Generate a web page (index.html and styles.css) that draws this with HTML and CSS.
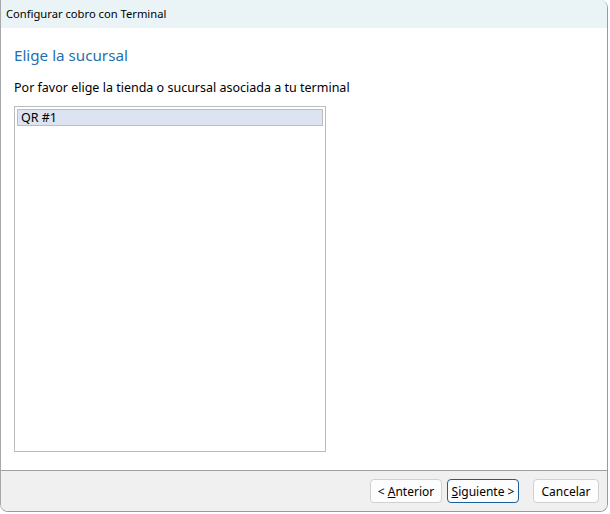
FILE: index.html
```html
<!DOCTYPE html>
<html lang="es">
<head>
    <meta charset="UTF-8">
    <title>Configurar cobro con Terminal</title>
    <link rel="stylesheet" href="styles.css">
</head>
<body>
    <div class="window">
        <div class="titlebar">Configurar cobro con Terminal</div>
        <div class="content">
            <h1 class="page-title">Elige la sucursal</h1>
            <p class="hint">Por favor elige la tienda o sucursal asociada a tu terminal</p>
            <div class="listbox">
                <div class="list-item selected">QR #1</div>
            </div>
        </div>
        <div class="footer">
            <button class="btn">&lt; <u>A</u>nterior</button>
            <button class="btn default"><u>S</u>iguiente &gt;</button>
            <button class="btn cancel">Cancelar</button>
        </div>
    </div>
</body>
</html>
```

FILE: styles.css
```css
html, body {
    margin: 0;
    padding: 0;
    background: #ffffff;
}
body {
    font-family: "Noto Sans", "Open Sans", sans-serif;
    font-size: 12.5px;
    color: #000;
}
.window {
    width: 608px;
    height: 512px;
    box-sizing: border-box;
    border: 1px solid #9a9a9a;
    border-top: none;
    border-left-color: #a8a8a8;
    border-radius: 0 8px 8px 8px;
    display: flex;
    flex-direction: column;
    overflow: hidden;
}
.titlebar {
    height: 28px;
    background: #eaf3f6;
    padding-left: 5px;
    line-height: 28px;
    font-size: 11.2px;
}
.content {
    flex: 1;
    padding: 0 13px;
    border-bottom: 1px solid #a0a0a0;
}
.page-title {
    margin: 16px 0 0;
    font-size: 15.2px;
    font-weight: normal;
    color: #1f6fb0;
    line-height: 22px;
}
.hint {
    margin: 14px 0 0;
    line-height: 16px;
}
.listbox {
    margin-top: 10px;
    width: 312px;
    height: 346px;
    box-sizing: border-box;
    border: 1px solid #bcbcbc;
    padding: 2px;
}
.list-item {
    height: 17px;
    line-height: 15px;
    padding-left: 3px;
    box-sizing: border-box;
}
.list-item.selected {
    background: #dde3f1;
    border: 1px solid #bdbdbd;
}
.footer {
    height: 40px;
    background: #f0f0f0;
    display: flex;
    align-items: center;
    justify-content: flex-end;
    padding-right: 8px;
}
.btn {
    font-family: inherit;
    font-size: 12px;
    height: 24px;
    width: 72px;
    padding: 0;
    background: #fdfdfd;
    border: 1px solid #d0d0d0;
    border-radius: 4px;
    margin-left: 5px;
    color: #000;
}
.btn.default {
    border-color: #1a5f9c;
}
.btn.cancel {
    margin-left: 14px;
    width: 66px;
}
```
